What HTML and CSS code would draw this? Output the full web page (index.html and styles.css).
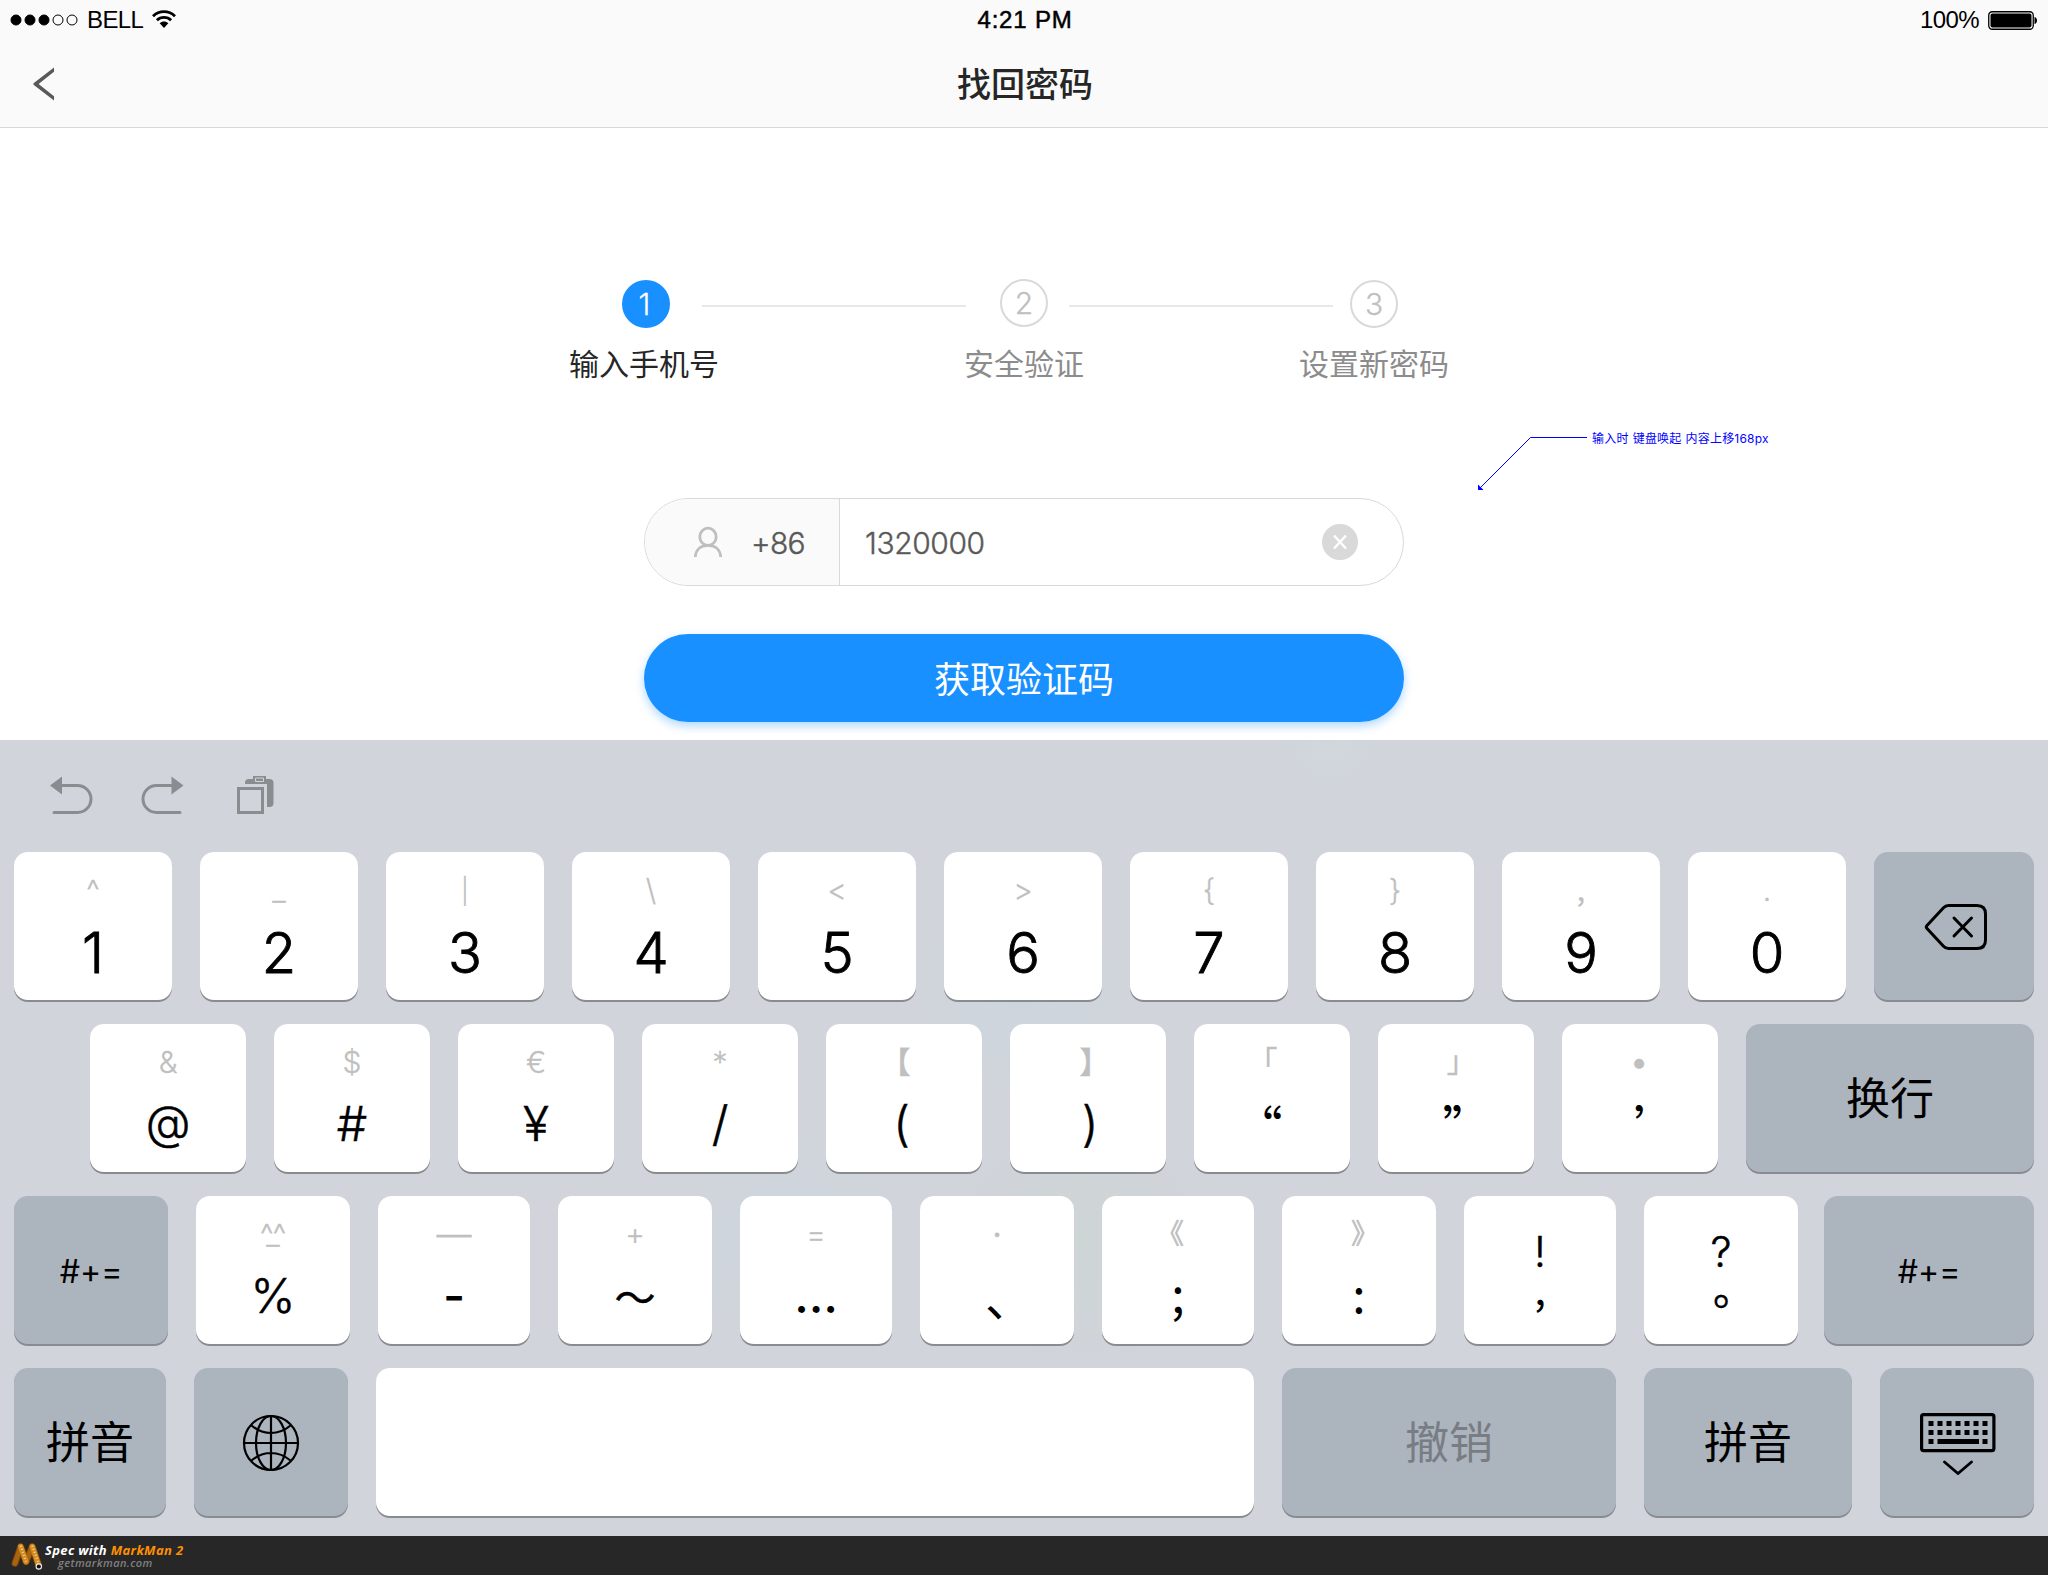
FILE: index.html
```html
<!DOCTYPE html>
<html lang="zh-CN">
<head>
<meta charset="utf-8">
<title>找回密码</title>
<link rel="stylesheet" href="styles.css">
</head>
<body>
<div class="screen">
  <header class="header">
    <div class="status">
      <div class="status-left">
        <svg class="signal" width="68" height="14" viewBox="0 0 68 14"><g stroke="#000" stroke-width="1"><circle cx="6" cy="7" r="5"/><circle cx="20" cy="7" r="5"/><circle cx="34" cy="7" r="5"/><circle cx="48" cy="7" r="5" fill="none"/><circle cx="62" cy="7" r="5" fill="none"/></g></svg>
        <span class="carrier">BELL</span>
        <svg class="wifi" width="24" height="18" viewBox="0 0 24 18"><g fill="none" stroke="#000" stroke-width="2.8"><path d="M1 6.2C7.2.2 16.800.2 23 6.200"/><path d="M4.900 10.200c4-3.800 10.200-3.800 14.200 0"/></g><path d="M7.700 13.200c2.400-2.200 6.200-2.200 8.600 0L12 18z"/></svg>
      </div>
      <div class="clock">4:21 PM</div>
      <div class="status-right">
        <span class="percent">100%</span>
        <svg class="battery" width="50" height="19" viewBox="0 0 50 19"><rect x=".75" y=".75" width="44.500" height="17.500" rx="3.500" fill="none" stroke="#000" stroke-width="1.300"/><rect x="2.500" y="2.500" width="41" height="14" rx="2"/><path d="M46.500 6c2 .6 2.500 2 2.500 3.500s-.5 2.900-2.500 3.500z"/></svg>
      </div>
    </div>
    <div class="navbar">
      <svg class="back" width="22" height="34" viewBox="0 0 22 34"><path d="M21 .5v4.300L5.600 17 21 29.200v4.300L.5 17.800v-1.600z" fill="#595959"/></svg>
      <h1 class="title">找回密码</h1>
    </div>
  </header>

  <main class="content">
    <div class="track">
      <span class="dot dot-on">1</span><i class="line line-a"></i><span class="dot dot-mid">2</span><i class="line line-b"></i><span class="dot">3</span>
    </div>
    <div class="labels">
      <span class="label label-on">输入手机号</span><span class="label">安全验证</span><span class="label">设置新密码</span>
    </div>
    <div class="field">
      <div class="prefix">
        <svg width="30" height="32" viewBox="0 0 30 32"><g fill="none" stroke="#bfbfbf" stroke-width="2.800"><ellipse cx="15" cy="10.800" rx="8.200" ry="8.600"/><path d="M2.300 31C2.800 23.500 8 19.400 15 19.400S27.200 23.500 27.700 31"/></g></svg>
        <span>+86</span>
      </div>
      <div class="value">1320000</div>
      <svg class="clear" width="36" height="36" viewBox="0 0 36 36"><circle cx="18" cy="18" r="18" fill="#d9d9d9"/><path d="M12 11.500l12 13M24 11.500l-12 13" stroke="#fff" stroke-width="2.400"/></svg>
    </div>
    <div class="submit">获取验证码</div>
    <div class="note">
      <svg width="112" height="56" viewBox="0 0 112 56"><path d="M110 2.500H53.500L3 53" fill="none" stroke="#00f" stroke-width="1"/><path d="M1 49.500V55h5.500z" fill="#00f"/></svg>
      <span>输入时 键盘唤起 内容上移168px</span>
    </div>
  </main>

  <section class="keyboard">
    <div class="tools">
      <svg width="44" height="40" viewBox="0 0 44 40"><path d="M0 10.500L12 1.500v18z" fill="#8a8d90"/><path d="M11 10.500h16.500a13.500 13.500 0 0 1 0 27H4" fill="none" stroke="#8a8d90" stroke-width="3" stroke-linecap="round"/></svg>
      <svg width="44" height="40" viewBox="0 0 44 40"><path d="M42.500 10.500L30.500 1.500v18z" fill="#8a8d90"/><path d="M31 10.500H15.500a13.500 13.500 0 0 0 0 27H39" fill="none" stroke="#8a8d90" stroke-width="3" stroke-linecap="round"/></svg>
      <svg class="paste" width="38" height="40" viewBox="0 0 38 40"><rect x="1.500" y="13.500" width="24" height="24" fill="none" stroke="#8a8d90" stroke-width="3"/><path d="M8 9V8q0-4 4-4h4V1h13v3h3.500q4 0 4 4v20q0 4-4 4H30V9z" fill="#8a8d90"/><path d="M18.500 3h8v3.500h-8z" fill="none" stroke="#d1d4db" stroke-width="1"/></svg>
    </div>

    <div class="row row-1">
      <div class="key"><span class="hint">^</span><b class="main">1</b></div>
      <div class="key"><span class="hint">_</span><b class="main">2</b></div>
      <div class="key"><span class="hint bar">|</span><b class="main">3</b></div>
      <div class="key"><span class="hint">\</span><b class="main">4</b></div>
      <div class="key"><span class="hint">&lt;</span><b class="main">5</b></div>
      <div class="key"><span class="hint">&gt;</span><b class="main">6</b></div>
      <div class="key"><span class="hint">{</span><b class="main">7</b></div>
      <div class="key"><span class="hint">}</span><b class="main">8</b></div>
      <div class="key"><span class="hint cjk">,</span><b class="main">9</b></div>
      <div class="key"><span class="hint">.</span><b class="main">0</b></div>
      <div class="key fn"><svg class="erase" width="64" height="48" viewBox="0 0 64 48"><g fill="none" stroke="#000" stroke-width="3" stroke-linejoin="round" stroke-linecap="round"><path d="M24.500 2.500H53q8.500 0 8.500 8.500v26q0 8.500-8.500 8.500H24.500q-3 0-5-2.200L3 25.500q-1.400-1.500 0-3L19.500 4.700q2-2.200 5-2.200z"/><path d="M30 15l17.500 18M47.500 15L30 33"/></g></svg></div>
    </div>

    <div class="row row-2">
      <div class="key"><span class="hint">&amp;</span><b class="main at">@</b></div>
      <div class="key"><span class="hint">$</span><b class="main">#</b></div>
      <div class="key"><span class="hint">€</span><b class="main">¥</b></div>
      <div class="key"><span class="hint">*</span><b class="main">/</b></div>
      <div class="key"><span class="hint cjk lens">【</span><b class="main open">(</b></div>
      <div class="key"><span class="hint cjk lens">】</span><b class="main close">)</b></div>
      <div class="key"><span class="hint cjk corner">「</span><b class="main quote">“</b></div>
      <div class="key"><span class="hint cjk corner">」</span><b class="main quote">”</b></div>
      <div class="key"><span class="hint bullet">•</span><b class="main quote single">’</b></div>
      <div class="key fn word">换行</div>
    </div>

    <div class="row row-3">
      <div class="key fn sym w154">#+=</div>
      <div class="key w154"><span class="hint face">^_^</span><b class="main">%</b></div>
      <div class="key w152"><span class="hint dash">—</span><b class="main hyphen">-</b></div>
      <div class="key w154"><span class="hint">+</span><b class="main cjk-main tilde">～</b></div>
      <div class="key w152"><span class="hint">=</span><b class="main dots">…</b></div>
      <div class="key w154"><span class="hint middot">·</span><b class="main cjk-main half">、</b></div>
      <div class="key w152"><span class="hint cjk angle">《</span><b class="main cjk-main latin">;</b></div>
      <div class="key w154"><span class="hint cjk angle">》</span><b class="main cjk-main latin">:</b></div>
      <div class="key w152"><span class="upper">!</span><b class="lower">,</b></div>
      <div class="key w154"><span class="upper">?</span><b class="lower ring">。</b></div>
      <div class="key fn sym wide">#+=</div>
    </div>

    <div class="row row-4">
      <div class="key fn word">拼音</div>
      <div class="key fn"><svg class="globe" width="58" height="58" viewBox="0 0 58 58"><g fill="none" stroke="#000" stroke-width="2.200"><circle cx="29" cy="29" r="27"/><ellipse cx="29" cy="29" rx="15" ry="27"/><path d="M29 2v54M2 29h54M9.500 11.500c12 10 27 10 39 0M9.500 46.500c12-10 27-10 39 0"/></g></svg></div>
      <div class="key space"></div>
      <div class="key fn word muted">撤销</div>
      <div class="key fn word">拼音</div>
      <div class="key fn"><svg class="hide" width="76" height="62" viewBox="0 0 76 62"><g fill="none" stroke="#000"><rect x="1.600" y="1.600" width="72.300" height="36" rx="2" stroke-width="3.200"/><path d="M8.500 10.500h60M8.500 19.500h60" stroke-width="5" stroke-dasharray="5 4"/><path d="M8.500 28.500h5M17.500 28.500h41.500M62.500 28.500h5" stroke-width="5"/><path d="M24.500 49L38 60.500 51.500 49" stroke-width="2.800" stroke-linecap="round"/></g></svg></div>
    </div>
  </section>

  <footer class="footer">
    <svg width="34" height="32" viewBox="0 0 34 32"><g fill="none" stroke-linecap="round" stroke-linejoin="round"><path d="M5 22.300L10.700 5.700 16 20.700 22.300 5.700l6.500 19" stroke="#7a420a" stroke-width="7"/><path d="M5 22.300L10.700 5.700M16 20.700L22.300 5.700" stroke="#a8650f" stroke-width="5"/><path d="M10.700 5.700L16 20.700M22.300 5.700l6.500 19" stroke="#d28a22" stroke-width="5.500"/><path d="M10.700 4.700L16 20.700M22.300 4.700l6 17" stroke="#f6cf85" stroke-width="2.400" stroke-linecap="butt" stroke-dasharray="1.200 2"/></g><circle cx="28.800" cy="25.500" r="3.200" fill="#eee"/><circle cx="28.800" cy="25.500" r="2.100" fill="#111"/></svg>
    <div class="brand"><div class="brand-name">Spec with <em>MarkMan 2</em></div><div class="brand-url">getmarkman.com</div></div>
  </footer>
</div>
</body>
</html>
```
FILE: styles.css
```css
* { box-sizing: border-box; }
body { margin: 0; background: #fff; font-family: Inter, "Noto Sans CJK SC", sans-serif; color: #000; }
svg { display: block; flex: none; }
.screen { width: 2048px; height: 1575px; display: flex; flex-direction: column; overflow: hidden; }

.header { height: 128px; background: #fafafa; border-bottom: 1px solid #d9d9d9; }
.status { height: 40px; display: grid; grid-template-columns: 1fr auto 1fr; align-items: center; padding: 0 10px; font: 24px/40px "Liberation Sans", sans-serif; }
.status-left, .status-right { display: flex; align-items: center; }
.status-right { justify-content: flex-end; }
.carrier { margin-left: 9px; letter-spacing: -0.6px; }
.wifi { margin-left: 9px; margin-top: -2px; }
.clock { letter-spacing: 0.8px; padding-left: 2px; -webkit-text-stroke: 0.5px #000; }
.percent { letter-spacing: -0.6px; margin-right: 9px; }
.navbar { height: 87px; display: grid; grid-template-columns: 100px 1fr 100px; align-items: center; }
.back { margin-left: 33px; }
.title { margin: 0; padding: 0 0 2px 2px; text-align: center; font: 500 34px/50px "Noto Sans CJK SC", sans-serif; color: #262626; }

.content { position: relative; height: 612px; overflow: hidden; }
.track { display: flex; align-items: center; height: 50px; margin-top: 151px; padding-left: 622px; }
.dot { width: 48px; height: 48px; border: 2px solid #d9d9d9; border-radius: 50%; color: #bfbfbf; font-size: 30px; font-weight: 300; -webkit-text-stroke: 0.3px; line-height: 44px; text-align: center; }
.dot-on { background: #1890ff; border-color: #1890ff; color: #fff; padding-right: 3px; }
.dot-mid { margin-bottom: 2px; }
.line { height: 2px; width: 264px; background: #e8e8e8; margin-top: 4px; }
.line-a { margin-left: 32px; margin-right: 34px; }
.line-b { margin-left: 21px; margin-right: 17px; }
.labels { display: flex; padding-left: 569px; margin-top: 8px; font: 30px/50px "Noto Sans CJK SC", sans-serif; color: #8c8c8c; }
.label { margin-right: 215px; }
.label-on { color: #262626; margin-right: 245px; }

.field { display: flex; align-items: center; width: 760px; height: 88px; margin: 111px auto 0; border: 1px solid #d9d9d9; border-radius: 44px; overflow: hidden; font-size: 30px; font-weight: 300; -webkit-text-stroke: 0.4px; color: #595959; }
.prefix { width: 195px; height: 100%; padding-left: 48px; display: flex; align-items: center; gap: 28px; background: #fafafa; border-right: 1px solid #d9d9d9; letter-spacing: -0.7px; }
.prefix span { padding-top: 1px; }
.value { flex: 1; padding: 1px 0 0 25px; letter-spacing: -0.4px; }
.clear { margin-right: 45px; }
.submit { width: 760px; height: 88px; margin: 48px auto 0; border-radius: 44px; background: #1890ff; box-shadow: 0 4px 10px rgba(24, 144, 255, 0.35); color: #fff; text-align: center; font: 36px/86px "Noto Sans CJK SC", sans-serif; }
.note { position: absolute; left: 1477px; top: 307px; display: flex; gap: 3px; font: 12px/18px Inter, "Noto Sans CJK SC", sans-serif; letter-spacing: 0.2px; word-spacing: 0.5px; color: #00f; white-space: nowrap; }
.note span { margin-top: -5px; }

.keyboard { height: 796px; padding: 0 14px; background:
  radial-gradient(circle at 1330px 0, #d0d7db, rgba(209, 212, 219, 0) 70px),
  radial-gradient(circle at 1020px 250px, #cdd6dd, rgba(209, 212, 219, 0) 110px),
  radial-gradient(circle at 790px 500px, #cdd6dd, rgba(209, 212, 219, 0) 110px),
  radial-gradient(circle at 1080px 500px, #ced5d5, rgba(209, 212, 219, 0) 130px),
  #d1d4db; }
.tools { height: 112px; display: flex; padding: 35px 0 0 36px; gap: 47px; }
.tools .paste { margin-left: 5px; }
.row { display: flex; gap: 28px; margin-bottom: 24px; height: 148px; }
.key { height: 148px; border-radius: 14px; background: #fff; box-shadow: 0 2px 0 #888b8f; display: flex; flex-direction: column; align-items: center; padding-top: 18px; }
.fn { background: #acb4be; justify-content: center; padding: 0; }
.hint { height: 40px; font-size: 30px; line-height: 40px; font-weight: 300; -webkit-text-stroke: 0.3px; color: #bfbfbf; }
.main { font-size: 48px; line-height: 83px; font-weight: 300; -webkit-text-stroke: 0.5px; }
.row-1 .key { width: 158px; }
.row-1 .main { font-size: 56px; line-height: 86px; -webkit-text-stroke: 0.9px; }
.row-1 .fn { width: 160px; }
.erase { margin-left: 4px; margin-top: 1px; }
.row-2 { padding-left: 76px; }
.row-2 .key { width: 156px; }
.row-2 .fn { width: 288px; }
.main.at { font-size: 46px; line-height: 81px; }
.bar { font-size: 25px; line-height: 43px; }
.open { padding-right: 5px; }
.close { padding-left: 4px; }
.cjk { font-family: "Noto Sans CJK SC", sans-serif; font-weight: 400; font-feature-settings: "halt"; line-height: 36px; }
.lens { font-weight: 700; padding-right: 2px; }
.corner { padding-right: 4px; line-height: 35px; }
.angle { font-size: 28px; padding-right: 2px; -webkit-text-stroke: 0.6px; }
.bullet { font-size: 36px; line-height: 38px; padding-right: 2px; }
.middot { font-weight: 500; }
.dash { font-size: 35px; }
.face { letter-spacing: -5px; padding-right: 5px; }
.hyphen, .dots { font-weight: 500; -webkit-text-stroke: 0; }
.quote, .cjk-main { font-family: "Noto Sans CJK SC", sans-serif; font-weight: 400; -webkit-text-stroke: 0; }
.quote { font-feature-settings: "halt"; line-height: 86px; padding-right: 3px; }
.single { padding: 0 0 0 11px; }
.half { font-feature-settings: "halt"; }
.tilde { font-size: 41px; -webkit-text-stroke: 0.5px; }
.latin { line-height: 76px; }
.word { font: 44px/60px "Noto Sans CJK SC", sans-serif; padding-bottom: 5px; }
.muted { color: #787d84; }
.sym { font-size: 32px; padding-top: 3px; }
.w152 { width: 152px; }
.w154 { width: 154px; }
.wide { width: 210px; margin-left: -2px; }
.upper { margin-top: 16px; font-size: 42px; line-height: 44px; font-weight: 300; -webkit-text-stroke: 0.5px; }
.lower { font: 400 42px/26px "Noto Sans CJK SC", sans-serif; }
.ring { padding-left: 5px; font-feature-settings: "halt"; -webkit-text-stroke: 0.4px; }
.row-4 { margin-bottom: 0; }
.row-4 .key:nth-child(1) { width: 152px; }
.row-4 .key:nth-child(2) { width: 154px; }
.row-4 .space { width: 878px; }
.row-4 .key:nth-child(4) { width: 334px; }
.row-4 .key:nth-child(5) { width: 208px; }
.row-4 .key:nth-child(6) { width: 154px; }
.globe { margin-top: 2px; }
.hide { margin: 4px 0 0 1px; }

.footer { height: 39px; background: #272727; display: flex; padding: 5px 0 0 10px; font-family: "Open Sans", sans-serif; font-style: italic; }
.brand { margin: 1px 0 0 1px; }
.brand-name { font-size: 13px; line-height: 16px; font-weight: 700; color: #fff; letter-spacing: 0.35px; }
.brand-name em { color: #ff9000; }
.brand-url { font-size: 11px; line-height: 9px; font-weight: 600; color: #808080; padding-left: 13px; letter-spacing: 0.4px; }
```
